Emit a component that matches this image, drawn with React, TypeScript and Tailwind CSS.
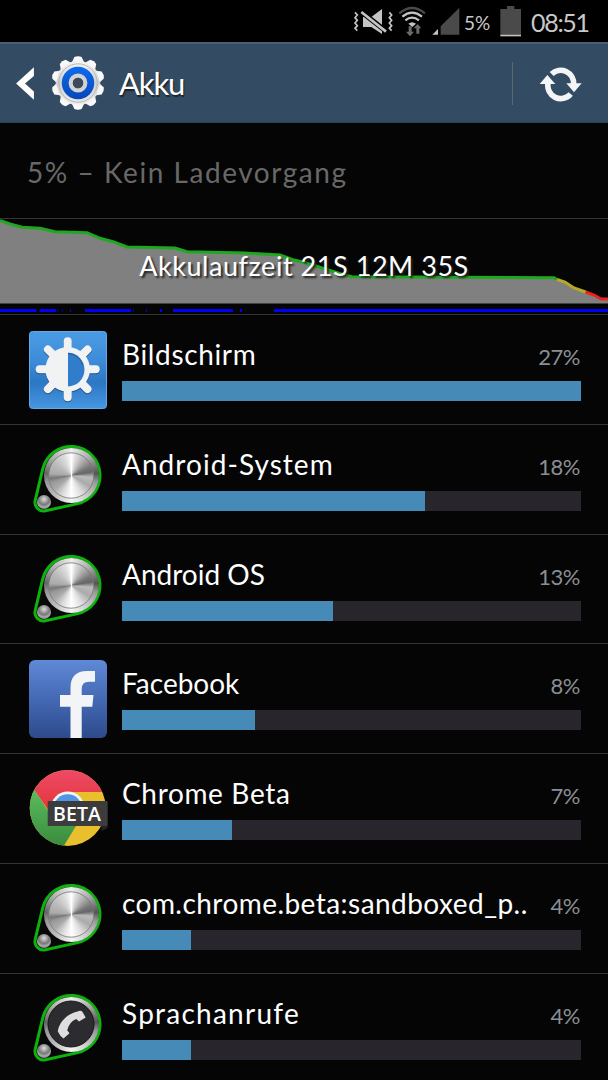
import type { ReactNode } from "react";
import clsx from "clsx";

type App = {
  name: string;
  tracking: string;
  percent: string;
  bar: number;
  icon: ReactNode;
};

function MuteVibrateIcon() {
  return (
    <svg viewBox="39 18 120 87" className="h-[29px] w-10 shrink-0">
      <g fill="none" stroke="#c4c4c4" strokeWidth="5">
        <path d="M45 34l7 8-7 8 7 8-7 8 7 8-7 8 7 7" />
        <path d="M148 34l7 8-7 8 7 8-7 8 7 8-7 8 7 7" />
      </g>
      <path d="M69 48h25l32-24v75L94 78H69z" fill="#c4c4c4" />
      <path d="M60 29l84 66" stroke="#000" strokeWidth="15" />
      <path d="M64 33l74 59" stroke="#c4c4c4" strokeWidth="8" />
    </svg>
  );
}

function WifiIcon() {
  return (
    <svg viewBox="174 15 84 90" className="ml-[5px] h-[30px] w-7 shrink-0">
      <g fill="none" strokeWidth="7">
        <path d="M178 37q38-32 77 0" stroke="#4a4a4a" />
        <path d="M187 47q29-24 59 0" stroke="#c4c4c4" />
        <path d="M196 58q20-16 41 0" stroke="#c4c4c4" />
      </g>
      <path d="M205 68q11-9 23 0l-11 10z" fill="#c4c4c4" />
      <path d="M206 76h9v16h7l-12 14-12-14h8zM229 98h9V82h6l-11-13-12 13h8z" fill="#6b6b6b" />
    </svg>
  );
}

function SignalIcon() {
  return (
    <svg viewBox="276 21 84 84" className="ml-1.5 h-7 w-7 shrink-0">
      <path d="M358 23v81h-56V79z" fill="#4a4a4a" />
      <path d="M294 87v17h-17z" fill="#c4c4c4" />
    </svg>
  );
}

function BatteryIcon() {
  return (
    <svg viewBox="480 12 66 96" className="h-8 w-[22px] shrink-0">
      <path d="M501 15h22v9h20v77h-62V24h20z" fill="#4a4a4a" />
      <path d="M481 101h62v5h-62z" fill="#c4c4c4" />
    </svg>
  );
}

function StatusBar() {
  return (
    <div className="flex h-[42px] shrink-0 items-center bg-black pl-[353px] text-[#c8c8c8]">
      <MuteVibrateIcon />
      <WifiIcon />
      <SignalIcon />
      <span className="ml-1 w-9 whitespace-nowrap pt-0.5 text-[19px] leading-none">5%</span>
      <BatteryIcon />
      <span className="ml-[9px] whitespace-nowrap pt-0.5 text-[25px] leading-none tracking-[-1.3px]">08:51</span>
    </div>
  );
}

function GearIcon() {
  const teeth = Array.from({ length: 10 }, (_, i) => i * 36);
  return (
    <svg viewBox="-28 -28 56 56" className="ml-4 h-14 w-14 shrink-0">
      <defs>
        <linearGradient id="gear" x1="0" y1="-27" x2="0" y2="27" gradientUnits="userSpaceOnUse">
          <stop offset="0" stopColor="#ffffff" />
          <stop offset=".5" stopColor="#cfcfcf" />
          <stop offset="1" stopColor="#f4f4f4" />
        </linearGradient>
        <linearGradient id="gearBlue" x1="0" y1="0" x2="0" y2="1">
          <stop offset="0" stopColor="#0d6cf0" />
          <stop offset="1" stopColor="#0448b8" />
        </linearGradient>
      </defs>
      <g fill="url(#gear)">
        <circle r="22.3" />
        {teeth.map((a) => (
          <path key={a} d="M-6-21L-3.6-26Q0-27.6 3.6-26L6-21z" transform={`rotate(${a})`} />
        ))}
      </g>
      <circle r="19.2" fill="none" stroke="#b4b4b4" strokeWidth=".9" />
      <circle r="16.2" fill="url(#gearBlue)" />
      <circle r="7.3" fill="none" stroke="#d2d2d2" strokeWidth="4.2" />
      <circle r="5.2" fill="#3c4a59" />
    </svg>
  );
}

function Header() {
  return (
    <header className="flex h-[81px] shrink-0 items-center border-t-2 border-b border-t-[#466079] border-b-[#29405a] bg-[#344c63]">
      <svg viewBox="48 78 54 100" className="ml-4 h-[33px] w-[18px] shrink-0">
        <path d="M102 79v26L75 128l27 24v25L48 128z" fill="#fff" />
      </svg>
      <GearIcon />
      <h1 className="ml-[13px] text-[31px] tracking-[-1.1px] text-white [text-shadow:1px_2px_1px_#222]">Akku</h1>
      <div className="mr-[26px] ml-auto h-[43px] w-px bg-[#5b6670]" />
      <svg viewBox="147 72 132 111" className="mr-[25px] h-[37px] w-11 shrink-0">
        <g fill="none" stroke="#f4f5f7" strokeWidth="17">
          <path d="M185 99A39 40 0 0 1 251 130" />
          <path d="M174 126A39 40 0 0 0 242 159" />
        </g>
        <path d="M149 129L172 102 196 129zM229 127H275L252 154z" fill="#f4f5f7" />
      </svg>
    </header>
  );
}

// [x, width] of each stretch with the screen on
const awake = [
  [0, 36.5], [39.5, 16.5], [57.5, 0.7], [62, 0.7], [70, 1], [85, 46], [133, 0.7],
  [146, 1], [160, 2], [173, 60], [240, 2], [274, 334],
];

const green =
  "0,1.5 10,5 22,8.3 40,9.3 55,12.7 87,13.7 100,19.3 113,22.7 127,28 175,29 187,32.7 245,34 280,36 293,40.7 304,43.3 319,48 344,56 352,57.7 554,58.7 557,60.5";
const yellow = "557,60.5 565,63 574,69 585.7,73";
const red = "585.7,73 594,76 601,80 608,80";

function BatteryChart() {
  return (
    <section className="relative h-24 shrink-0 border-b border-[#333]">
      <svg viewBox="0 0 608 95" className="block h-[95px] w-full">
        <polygon points={`${green} ${yellow} ${red} 608,84.5 0,84.5`} fill="#808080" />
        <g fill="none" strokeWidth="3">
          <polyline points={green} stroke="#1fa81f" />
          <polyline points={yellow} stroke="#b5a927" />
          <polyline points={red} stroke="#ee2020" />
        </g>
        {awake.map(([x, w]) => (
          <rect key={x} x={x} y="90" width={w} height="3" fill="#0000fa" />
        ))}
      </svg>
      <p className="absolute inset-x-0 top-[29px] text-center text-[27px] leading-9 tracking-[0.55px] whitespace-nowrap text-white [text-shadow:2px_2px_2px_#222]">
        Akkulaufzeit 21S 12M 35S
      </p>
    </section>
  );
}

function DisplayIcon() {
  const rays = Array.from({ length: 8 }, (_, i) => i * 45);
  return (
    <svg viewBox="0 0 78 78" className="size-[78px]">
      <defs>
        <linearGradient id="display" x1="0" y1="0" x2="0" y2="1">
          <stop offset="0" stopColor="#4b9be4" />
          <stop offset=".4" stopColor="#3b8bd8" />
          <stop offset=".66" stopColor="#2c77c4" />
          <stop offset="1" stopColor="#4796e0" />
        </linearGradient>
      </defs>
      <rect x=".5" y=".5" width="77" height="77" rx="3" fill="url(#display)" stroke="#62a9ec" />
      {["#20507f", "#f1f2f4"].map((color, i) => (
        <g key={color} transform={`translate(38.7 ${i ? 38.3 : 39.3})`}>
          {rays.map((a) => (
            <path key={a} d="M0-20V-28" stroke={color} strokeWidth="8" strokeLinecap="round" transform={`rotate(${a})`} />
          ))}
          <circle r="22.3" fill={color} />
        </g>
      ))}
      <path d="M39 21.8a16.5 16.8 0 0 1 0 33.6z" fill="#2f7dcb" />
      <path d="M39 22.3a16.5 16.8 0 0 1 15 12" fill="none" stroke="#285a89" />
    </svg>
  );
}

function KnobIcon({ phone = false }: { phone?: boolean }) {
  return (
    <svg viewBox="0 0 78 78" className="size-[78px]">
      <path
        d="M13.8 27.7A29 29 0 1 1 47.8 62.9L16.4 69.8A8.7 8.7 0 0 1 6.2 59.3z"
        fill="#080808"
        stroke="#0db30d"
        strokeWidth="3"
      />
      <foreignObject x="14.5" y="7" width="55" height="55">
        <div className="size-[55px] rounded-full bg-[conic-gradient(#eee,#aaa_45deg,#555_85deg,#999_105deg,#ccc_145deg,#f5f5f5_180deg,#bbb_220deg,#999_255deg,#666_275deg,#aaa_310deg,#eee)]" />
      </foreignObject>
      <foreignObject x="7.7" y="54.3" width="14" height="14">
        <div className="size-[14px] rounded-full bg-[radial-gradient(circle_at_50%_30%,#ddd,#777_45%,#aaa_65%,#555)]" />
      </foreignObject>
      {phone ? (
        <>
          <circle cx="42" cy="34" r="23" fill="#2c2c30" stroke="#151515" />
          <path
            d="M48.5 21.5Q52 19.8 53.5 22L56.7 27.5 50 31.5 47.3 29Q40 32 38.2 40.3L40.5 43.2 34.5 48.6Q31 46 28.8 41.5C30 32 38 24 48.5 21.5z"
            fill="#dedede"
          />
        </>
      ) : (
        <>
          <foreignObject x="19.5" y="12" width="45" height="45">
            <div className="size-[45px] rounded-full bg-[conic-gradient(#fff,#ddd_12deg,#aaa_40deg,#777_65deg,#666_80deg,#bbb_95deg,#aaa_120deg,#ddd_150deg,#fff_180deg,#ddd_205deg,#aaa_230deg,#999_250deg,#777_262deg,#aaa_275deg,#bbb_305deg,#ddd_340deg,#fff)]" />
          </foreignObject>
          <circle cx="42" cy="34.5" r="22.7" fill="none" stroke="#777" strokeOpacity=".8" />
        </>
      )}
    </svg>
  );
}

function FacebookIcon() {
  return (
    <svg viewBox="0 0 78 78" className="size-[78px]">
      <defs>
        <linearGradient id="fb" x1="0" y1="0" x2="0" y2="1">
          <stop offset="0" stopColor="#6089d6" />
          <stop offset=".5" stopColor="#4469b4" />
          <stop offset="1" stopColor="#2d4b8b" />
        </linearGradient>
      </defs>
      <rect width="78" height="78" rx="6" fill="url(#fb)" />
      <path
        d="M41.5 78V46.7H31V35H41.5V28Q41.5 11 58 11H66V21.7H60Q52.7 21.7 52.7 29V35H64.5L63.3 46.7H52.7V78z"
        fill="#f3f4f8"
      />
    </svg>
  );
}

function ChromeBetaIcon() {
  return (
    <svg viewBox="0 0 78 78" className="size-[78px] overflow-visible">
      <defs>
        <clipPath id="disc">
          <circle cx="38.7" cy="37.9" r="38" />
        </clipPath>
        <linearGradient id="chromeGreen" x1="0" y1="0" x2="0" y2="1">
          <stop offset="0" stopColor="#62c464" />
          <stop offset="1" stopColor="#388a3c" />
        </linearGradient>
        <linearGradient id="chromeRed" x1="0" y1="0" x2="0" y2="1">
          <stop offset="0" stopColor="#ee4a68" />
          <stop offset="1" stopColor="#e33434" />
        </linearGradient>
      </defs>
      <g clipPath="url(#disc)">
        <rect width="78" height="78" fill="#e9bf2d" />
        <path d="M0 10L6 20 22 46 47 56 33.5 78H0z" fill="url(#chromeGreen)" />
        <path d="M0 0H78V22H38.7L22 44 5.5 20z" fill="url(#chromeRed)" />
        <circle cx="38.7" cy="38.5" r="17" fill="#f3f3f3" />
        <circle cx="38.7" cy="38.5" r="14.3" fill="#5096e4" />
      </g>
      <path d="M72 56h6.7v2l-6 3z" fill="#222" />
      <rect x="18.7" y="31" width="60" height="25" rx="1" fill="#3c3c3c" />
      <text x="24" y="50.7" textLength="48" fill="#fff" className="font-['Open_Sans',sans-serif] text-[19.5px] font-semibold">
        BETA
      </text>
    </svg>
  );
}

const apps: App[] = [
  { name: "Bildschirm", tracking: "tracking-[0.65px]", percent: "27%", bar: 459, icon: <DisplayIcon /> },
  { name: "Android-System", tracking: "tracking-[1.05px]", percent: "18%", bar: 303, icon: <KnobIcon /> },
  { name: "Android OS", tracking: "tracking-normal", percent: "13%", bar: 211, icon: <KnobIcon /> },
  { name: "Facebook", tracking: "tracking-normal", percent: "8%", bar: 133, icon: <FacebookIcon /> },
  { name: "Chrome Beta", tracking: "tracking-[0.65px]", percent: "7%", bar: 110, icon: <ChromeBetaIcon /> },
  { name: "com.chrome.beta:sandboxed_p..", tracking: "tracking-[0.45px]", percent: "4%", bar: 69, icon: <KnobIcon /> },
  { name: "Sprachanrufe", tracking: "tracking-[1.25px]", percent: "4%", bar: 69, icon: <KnobIcon phone /> },
];

function AppRow({ app }: { app: App }) {
  return (
    <li className="flex h-[109.75px] border-b border-[#333] pt-4 pr-[27px] pl-[29px]">
      <div className="w-[93px] shrink-0">{app.icon}</div>
      <div className="min-w-0 flex-1">
        <div className="flex h-[50px] items-baseline justify-between whitespace-nowrap">
          <span className={clsx("text-[28px] leading-[46px] text-white", app.tracking)}>{app.name}</span>
          <span className="pr-px text-[22px] tracking-[-0.5px] text-[#8b8f94]">{app.percent}</span>
        </div>
        <div className="h-5 bg-[#28252c]">
          <div className="h-5 bg-[#468ab8]" style={{ width: app.bar }} />
        </div>
      </div>
    </li>
  );
}

export default function BatteryScreen() {
  return (
    <div className="flex h-[1080px] w-[608px] flex-col overflow-hidden bg-[#050505] font-[Lato,sans-serif]">
      <StatusBar />
      <Header />
      <p className="h-24 shrink-0 border-b border-[#333] pl-[27px] text-[28px] leading-[98px] tracking-[1.55px] text-[#686868]">
        5% – Kein Ladevorgang
      </p>
      <BatteryChart />
      <ul>
        {apps.map((app) => (
          <AppRow key={app.name} app={app} />
        ))}
      </ul>
    </div>
  );
}
